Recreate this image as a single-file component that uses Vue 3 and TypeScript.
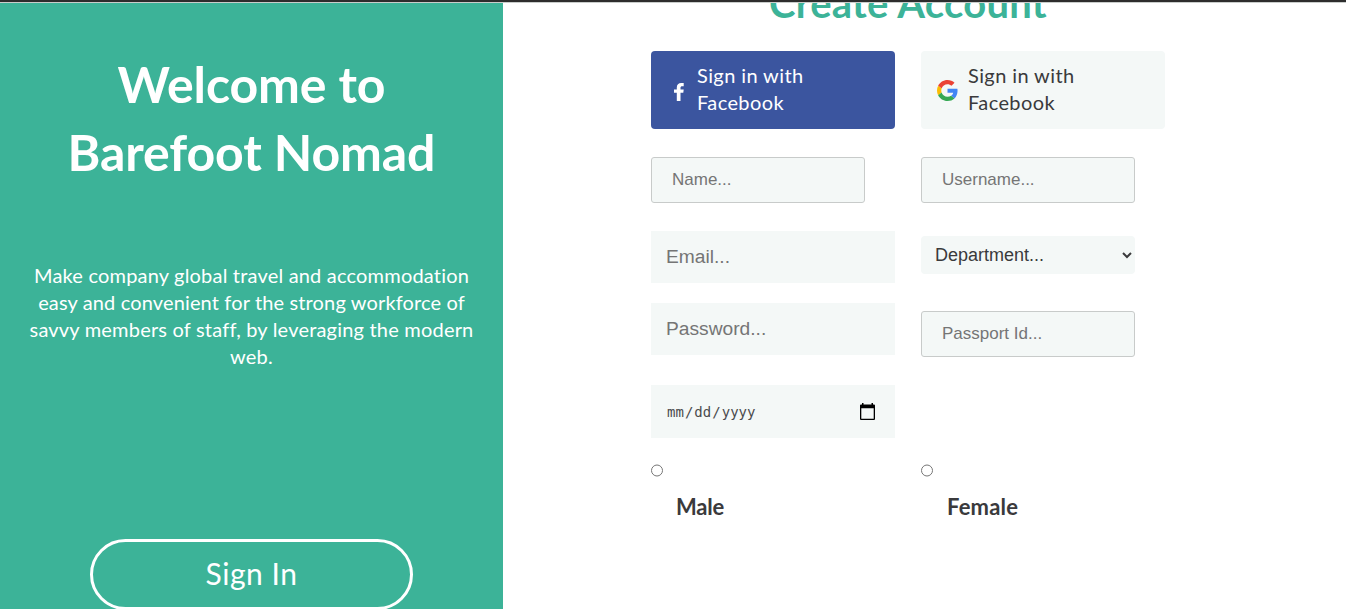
<script setup lang="ts">
import { ref } from 'vue'

const intro: { text: string; cls: string }[] = [
  { text: 'Make company global travel and accommodation', cls: 'l1' },
  { text: 'easy and convenient for the strong workforce of', cls: 'l2' },
  { text: 'savvy members of staff, by leveraging the modern', cls: 'l3' },
  { text: 'web.', cls: 'l4' },
]
const department = ref('')
const gender = ref('')
</script>

<template>
  <div class="page">
    <div class="topline"></div>
    <div class="body">
      <aside class="welcome">
        <h1><span class="h-a">Welcome to</span><span class="h-b">Barefoot Nomad</span></h1>
        <p>
          <span v-for="line in intro" :key="line.cls" :class="line.cls">{{ line.text }}</span>
        </p>
        <button class="signin" type="button"><span>Sign In</span></button>
      </aside>
      <main>
        <h2><span>Create Account</span></h2>
        <form class="columns" @submit.prevent>
          <div class="col">
            <button type="button" class="social facebook">
              <svg class="fb" viewBox="0 0 10 18"><path fill="#fff" d="M2.800 18V9.800H0V6.500h2.800V4.600C2.800 1.600 4.500 0 7.200 0H9.700v3.200H8.200C7 3.200 6.500 3.700 6.500 4.800V6.500H9.700L9.300 9.800H6.500v8.200z" /></svg>
              <span>Sign in with<br />Facebook</span>
            </button>
            <input class="boxed" type="text" placeholder="Name..." />
            <input class="flat" type="email" placeholder="Email..." />
            <input class="flat pass" type="password" placeholder="Password..." />
            <div class="date">
              <span>mm</span><i>/</i><span>dd</span><i>/</i><span>yyyy</span>
              <svg class="cal" viewBox="0 0 15 17"><path fill="#000" fill-rule="evenodd" d="M2 0h1.500v1.500h8V0H13v1.500h1a1 1 0 0 1 1 1V16a1 1 0 0 1-1 1H1a1 1 0 0 1-1-1V2.500a1 1 0 0 1 1-1h1zM1.300 5.300v10.400h12.400V5.300z" /></svg>
            </div>
            <input v-model="gender" class="radio" type="radio" name="gender" value="male" />
            <label>Male</label>
          </div>
          <div class="col">
            <button type="button" class="social google">
              <svg class="g" viewBox="0 0 48 48">
                <path fill="#EA4335" d="M24 9.500c3.540 0 6.710 1.220 9.210 3.600l6.850-6.850C35.900 2.380 30.470 0 24 0 14.620 0 6.510 5.380 2.560 13.220l7.980 6.190C12.430 13.720 17.740 9.500 24 9.500z" />
                <path fill="#4285F4" d="M46.980 24.550c0-1.570-.15-3.090-.38-4.550H24v9.020h12.940c-.58 2.960-2.260 5.480-4.780 7.180l7.730 6c4.510-4.180 7.090-10.360 7.090-17.650z" />
                <path fill="#FBBC05" d="M10.530 28.590c-.48-1.450-.76-2.990-.76-4.590s.27-3.140.76-4.590l-7.980-6.190C.92 16.460 0 20.120 0 24s.92 7.540 2.560 10.780z" />
                <path fill="#34A853" d="M24 48c6.480 0 11.930-2.130 15.890-5.810l-7.730-6c-2.150 1.450-4.920 2.300-8.160 2.300-6.260 0-11.570-4.220-13.470-9.910l-7.980 6.190C6.510 42.620 14.620 48 24 48z" />
              </svg>
              <span>Sign in with<br />Facebook</span>
            </button>
            <input class="boxed" type="text" placeholder="Username..." />
            <select v-model="department">
              <option value="">Department...</option>
            </select>
            <input class="boxed passport" type="text" placeholder="Passport Id..." />
            <input v-model="gender" class="radio right" type="radio" name="gender" value="female" />
            <label class="female">Female</label>
          </div>
        </form>
      </main>
    </div>
  </div>
</template>

<style>
body {
  overflow: hidden;
  background: #fff;
}
</style>

<style scoped>
* {
  box-sizing: border-box;
}
.page {
  height: 609px;
  overflow: hidden;
  display: flex;
  flex-direction: column;
  font-family: Lato, sans-serif;
  color: #3a3a3c;
}
.topline {
  height: 3px;
  flex: none;
  background: #2d2d2d;
  border-bottom: 1px solid #c9cdcb;
}
.body {
  flex: 1;
  min-height: 0;
  display: flex;
  overflow: hidden;
}
.welcome {
  width: 503px;
  flex: none;
  background: #3cb398;
  color: #fff;
  display: flex;
  flex-direction: column;
  align-items: center;
  text-align: center;
}
h1 {
  margin: 47px 0 0;
  font-size: 50px;
  line-height: 68px;
  font-weight: 700;
  display: flex;
  flex-direction: column;
  align-items: center;
}
h1 span,
p span {
  white-space: nowrap;
}
.h-a { letter-spacing: -0.1px; }
.h-b { letter-spacing: -0.1px; }
p {
  margin: 76px 0 0;
  font-size: 20px;
  line-height: 27px;
  display: flex;
  flex-direction: column;
  align-items: center;
}
.l1 { letter-spacing: 0.19px; }
.l2 { letter-spacing: 0.14px; }
.l3 { letter-spacing: 0.2px; }
.l4 { letter-spacing: 0.2px; }
.signin {
  margin-top: 169px;
  width: 323px;
  height: 71px;
  flex: none;
  border: 3px solid #fff;
  border-radius: 36px;
  background: transparent;
  color: #fff;
  font: 400 30px/40px Lato, sans-serif;
  letter-spacing: 0.5px;
  padding: 0 0 4px;
}
main {
  flex: 1;
  display: flex;
  flex-direction: column;
}
h2 {
  margin: -27px 0 0 266px;
  height: 54px;
  font-size: 40px;
  line-height: 54px;
  font-weight: 700;
  color: #3cb398;
  letter-spacing: 0.25px;
  white-space: nowrap;
}
.columns {
  margin: 21px 0 0 148px;
  display: flex;
  gap: 26px;
}
.col {
  width: 244px;
  display: flex;
  flex-direction: column;
  align-items: flex-start;
}
.social {
  width: 244px;
  height: 78px;
  border: 0;
  border-radius: 4px;
  display: flex;
  align-items: center;
  text-align: left;
  font: 400 20px/27px Lato, sans-serif;
  letter-spacing: 0.4px;
  padding: 0;
}
.social span {
  margin-bottom: 2px;
}
.facebook {
  background: #3b559f;
  color: #fff;
}
.google {
  background: #f4f8f7;
  color: #3a3a3c;
}
.fb {
  width: 10px;
  height: 18px;
  margin: 4px 13px 0 23px;
}
.g {
  width: 21px;
  height: 21px;
  margin: 1px 10px 0 16px;
}
.boxed {
  width: 214px;
  height: 46px;
  margin: 28px 0 0;
  padding: 0 20px;
  border: 1px solid #c8cbca;
  border-radius: 3px;
  background: #f4f8f7;
  font: 17px "Liberation Sans", Arial, sans-serif;
}
.flat {
  width: 244px;
  height: 52px;
  margin: 28px 0 0;
  padding: 0 15px;
  border: 0;
  background: #f4f8f7;
  font: 19.2px "Liberation Sans", Arial, sans-serif;
}
input::placeholder {
  color: #757575;
  opacity: 1;
}
.pass {
  margin-top: 20px;
}
select {
  width: 214px;
  height: 38px;
  margin-top: 33px;
  padding: 0 0 0 10px;
  border: 0;
  border-radius: 4px;
  background-color: #f4f8f7;
  color: #3a3a3c;
  font: 18px "Liberation Sans", Arial, sans-serif;
}
.passport {
  margin-top: 37px;
}
.date {
  width: 244px;
  height: 53px;
  margin-top: 30px;
  padding: 0 20px 0 16px;
  display: flex;
  align-items: center;
  background: #f4f8f7;
  color: #4a4a4c;
  font: 14px/20px "DejaVu Sans Mono", monospace;
}
.date i {
  font-style: normal;
  width: 10.5px;
  text-align: center;
}
.cal {
  width: 15px;
  height: 17px;
  margin-left: auto;
  margin-bottom: 1px;
}
.radio {
  width: 12px;
  height: 13px;
  margin: 26px 0 0;
}
.right {
  margin-top: 107px;
}
label {
  margin: 15px 0 0 25px;
  font-size: 22px;
  line-height: 30px;
  font-weight: 700;
  letter-spacing: -0.2px;
}
.female {
  margin-left: 26px;
  letter-spacing: 0.2px;
}
</style>
